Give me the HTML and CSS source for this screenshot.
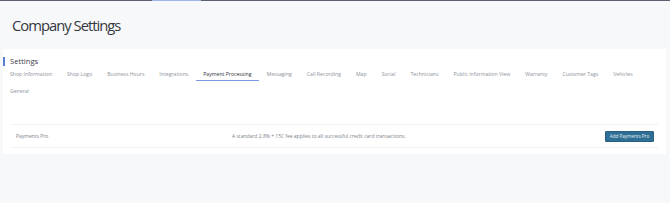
FILE: index.html
```html
<!DOCTYPE html>
<html>
<head>
<meta charset="utf-8">
<link rel="stylesheet" href="styles.css">
</head>
<body>
<div class="topbar"><span class="topbar-active"></span></div>
<header class="page-header">
  <h1 class="page-title">Company Settings</h1>
</header>
<section class="card">
  <div class="card-heading">Settings</div>
  <nav class="tabs">
    <a class="tab">Shop Information</a>
    <a class="tab">Shop Logo</a>
    <a class="tab">Business Hours</a>
    <a class="tab">Integrations</a>
    <a class="tab active">Payment Processing</a>
    <a class="tab">Messaging</a>
    <a class="tab">Call Recording</a>
    <a class="tab">Map</a>
    <a class="tab">Social</a>
    <a class="tab">Technicians</a>
    <a class="tab">Public information View</a>
    <a class="tab">Warranty</a>
    <a class="tab">Customer Tags</a>
    <a class="tab">Vehicles</a>
  </nav>
  <nav class="tabs second">
    <a class="tab">General</a>
  </nav>
  <div class="row">
    <div class="row-label">Payments Pro</div>
    <div class="row-text">A standard 2.8% + 15¢ fee applies to all successful credit card transactions.</div>
    <button class="btn">Add Payments Pro</button>
  </div>
</section>
</body>
</html>
```
FILE: styles.css
```css
html, body {
  margin: 0;
  padding: 0;
}
body {
  background: #f7f8fa;
  font-family: "Open Sans", "Noto Sans", sans-serif;
  color: #4a4f57;
  width: 670px;
  height: 203px;
  overflow: hidden;
}
.topbar {
  position: relative;
  height: 1px;
  background: #5c6272;
}
.topbar-active {
  position: absolute;
  left: 152px;
  top: 0;
  width: 49px;
  height: 1px;
  background: #9db5e8;
}
.page-header {
  height: 48px;
  padding-left: 12px;
  box-sizing: border-box;
}
.page-title {
  margin: 0;
  padding-top: 14px;
  font-size: 14.8px;
  font-weight: 400;
  line-height: 20px;
  color: #353940;
  letter-spacing: -1px;
}
.card {
  background: #fff;
  margin: 0 4px 0 3px;
  height: 105px;
  box-sizing: border-box;
  padding-top: 8px;
}
.card-heading {
  border-left: 2px solid #5b7fd6;
  padding-left: 5px;
  font-size: 7.6px;
  line-height: 9px;
  color: #3c4048;
}
.tabs {
  display: flex;
  padding-left: 0;
  margin-top: 3px;
}
.tab {
  font-size: 5.15px;
  line-height: 8px;
  color: #8d929b;
  padding: 1px 7.5px 2px;
  white-space: nowrap;
  border-bottom: 1.5px solid transparent;
}
.tab:first-child {
  padding-left: 7px;
}
.tab.active {
  color: #2e333b;
  border-bottom-color: #7b9ae6;
}
.tabs.second {
  margin-top: 5px;
}
.row {
  display: flex;
  align-items: center;
  margin: 26px 8px 0 9px;
  height: 22px;
  border-top: 1px solid #f1f2f4;
  border-bottom: 1px solid #f1f2f4;
  padding: 0 4px 0 4px;
  font-size: 5px;
  color: #7c818a;
}
.row-label {
  width: 120px;
}
.row-text {
  flex: 1;
  padding-left: 96px;
}
.btn {
  background: #2f6f95;
  color: #e8eef3;
  border: 1px solid #295f82;
  border-radius: 1px;
  font-family: inherit;
  font-size: 4.6px;
  height: 11px;
  padding: 0;
  width: 49px;
  white-space: nowrap;
}
```
